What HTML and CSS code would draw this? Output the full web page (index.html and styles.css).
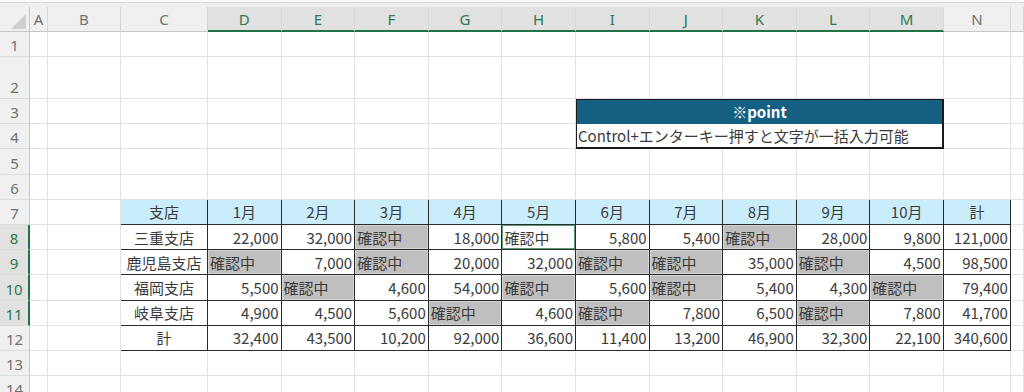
FILE: index.html
```html
<!DOCTYPE html>
<html lang="ja">
<head>
    <meta charset="UTF-8">
    <meta name="viewport" content="width=device-width, initial-scale=1.0">
    <title>支店別売上</title>
    <link rel="stylesheet" href="styles.css">
</head>
<body>
    <div class="topbar"></div>
    <div class="sheet">
        <!-- column headers -->
        <div class="corner"><svg width="30" height="25" viewBox="0 0 30 25"><polygon points="26,7 26,22 11,22" fill="#cfcfcf"/></svg></div>
        <div class="colhead">A</div>
        <div class="colhead">B</div>
        <div class="colhead">C</div>
        <div class="colhead sel">D</div>
        <div class="colhead sel">E</div>
        <div class="colhead sel">F</div>
        <div class="colhead sel">G</div>
        <div class="colhead sel">H</div>
        <div class="colhead sel">I</div>
        <div class="colhead sel">J</div>
        <div class="colhead sel">K</div>
        <div class="colhead sel">L</div>
        <div class="colhead sel">M</div>
        <div class="colhead">N</div>
        <div class="colhead"></div>

        <!-- point box I3:M4 -->
        <div class="point">
            <div class="point-head">※point</div>
            <div class="point-body">Control+エンターキー押すと文字が一括入力可能</div>
        </div>

        <!-- sales table C7:N12 -->
        <div class="sales">
            <div class="h">支店</div><div class="h">1月</div><div class="h">2月</div><div class="h">3月</div><div class="h">4月</div><div class="h">5月</div><div class="h">6月</div><div class="h">7月</div><div class="h">8月</div><div class="h">9月</div><div class="h">10月</div><div class="h">計</div>

            <div class="name">三重支店</div>
            <div class="num">22,000</div><div class="num">32,000</div><div class="wait">確認中</div><div class="num">18,000</div><div class="txt active">確認中</div><div class="num">5,800</div><div class="num">5,400</div><div class="wait">確認中</div><div class="num">28,000</div><div class="num">9,800</div><div class="num">121,000</div>

            <div class="name">鹿児島支店</div>
            <div class="wait">確認中</div><div class="num">7,000</div><div class="wait">確認中</div><div class="num">20,000</div><div class="num">32,000</div><div class="wait">確認中</div><div class="wait">確認中</div><div class="num">35,000</div><div class="wait">確認中</div><div class="num">4,500</div><div class="num">98,500</div>

            <div class="name">福岡支店</div>
            <div class="num">5,500</div><div class="wait">確認中</div><div class="num">4,600</div><div class="num">54,000</div><div class="wait">確認中</div><div class="num">5,600</div><div class="wait">確認中</div><div class="num">5,400</div><div class="num">4,300</div><div class="wait">確認中</div><div class="num">79,400</div>

            <div class="name">岐阜支店</div>
            <div class="num">4,900</div><div class="num">4,500</div><div class="num">5,600</div><div class="wait">確認中</div><div class="num">4,600</div><div class="wait">確認中</div><div class="num">7,800</div><div class="num">6,500</div><div class="wait">確認中</div><div class="num">7,800</div><div class="num">41,700</div>

            <div class="name">計</div>
            <div class="num">32,400</div><div class="num">43,500</div><div class="num">10,200</div><div class="num">92,000</div><div class="num">36,600</div><div class="num">11,400</div><div class="num">13,200</div><div class="num">46,900</div><div class="num">32,300</div><div class="num">22,100</div><div class="num">340,600</div>
        </div>

        <!-- row 1 -->
        <div class="rowhead">1</div>
        <div class="c"></div><div class="c"></div><div class="c"></div><div class="c"></div><div class="c"></div><div class="c"></div><div class="c"></div><div class="c"></div><div class="c"></div><div class="c"></div><div class="c"></div><div class="c"></div><div class="c"></div><div class="c"></div><div class="c"></div>
        <!-- row 2 -->
        <div class="rowhead">2</div>
        <div class="c"></div><div class="c"></div><div class="c"></div><div class="c"></div><div class="c"></div><div class="c"></div><div class="c"></div><div class="c"></div><div class="c"></div><div class="c"></div><div class="c"></div><div class="c"></div><div class="c"></div><div class="c"></div><div class="c"></div>
        <!-- row 3 (I..M taken by point box) -->
        <div class="rowhead">3</div>
        <div class="c"></div><div class="c"></div><div class="c"></div><div class="c"></div><div class="c"></div><div class="c"></div><div class="c"></div><div class="c"></div><div class="c"></div><div class="c"></div>
        <!-- row 4 -->
        <div class="rowhead">4</div>
        <div class="c"></div><div class="c"></div><div class="c"></div><div class="c"></div><div class="c"></div><div class="c"></div><div class="c"></div><div class="c"></div><div class="c"></div><div class="c"></div>
        <!-- row 5 -->
        <div class="rowhead">5</div>
        <div class="c"></div><div class="c"></div><div class="c"></div><div class="c"></div><div class="c"></div><div class="c"></div><div class="c"></div><div class="c"></div><div class="c"></div><div class="c"></div><div class="c"></div><div class="c"></div><div class="c"></div><div class="c"></div><div class="c"></div>
        <!-- row 6 -->
        <div class="rowhead">6</div>
        <div class="c"></div><div class="c"></div><div class="c"></div><div class="c"></div><div class="c"></div><div class="c"></div><div class="c"></div><div class="c"></div><div class="c"></div><div class="c"></div><div class="c"></div><div class="c"></div><div class="c"></div><div class="c"></div><div class="c"></div>
        <!-- rows 7-12 (C..N taken by sales table) -->
        <div class="rowhead">7</div>
        <div class="c"></div><div class="c"></div><div class="c"></div>
        <div class="rowhead sel">8</div>
        <div class="c"></div><div class="c"></div><div class="c"></div>
        <div class="rowhead sel">9</div>
        <div class="c"></div><div class="c"></div><div class="c"></div>
        <div class="rowhead sel">10</div>
        <div class="c"></div><div class="c"></div><div class="c"></div>
        <div class="rowhead sel">11</div>
        <div class="c"></div><div class="c"></div><div class="c"></div>
        <div class="rowhead">12</div>
        <div class="c"></div><div class="c"></div><div class="c"></div>
        <!-- row 13 -->
        <div class="rowhead">13</div>
        <div class="c"></div><div class="c"></div><div class="c"></div><div class="c"></div><div class="c"></div><div class="c"></div><div class="c"></div><div class="c"></div><div class="c"></div><div class="c"></div><div class="c"></div><div class="c"></div><div class="c"></div><div class="c"></div><div class="c"></div>
        <!-- row 14 -->
        <div class="rowhead">14</div>
        <div class="c"></div><div class="c"></div><div class="c"></div><div class="c"></div><div class="c"></div><div class="c"></div><div class="c"></div><div class="c"></div><div class="c"></div><div class="c"></div><div class="c"></div><div class="c"></div><div class="c"></div><div class="c"></div><div class="c"></div>
    </div>
</body>
</html>
```

FILE: styles.css
```css
*{
    box-sizing:border-box;
}
body{
    margin:0;
    background-color:#ffffff;
    font-family:"Noto Sans CJK JP","Noto Sans",sans-serif;
    font-size:15px;
    color:#3a3a3a;
    overflow:hidden;
}
.topbar{
    height:7px;
    background:linear-gradient(#fafafa 0 2px, #d6d6d6 2px 3px, #f0f0f0 3px);
}
.sheet{
    display:grid;
    grid-template-columns:30px 18px 73px 87px repeat(10, 73.6px) 67px 1fr;
    grid-template-rows:25px 25px 42px repeat(12, 25.2px);
}

/* headers */
.corner{
    background-color:#f0f0f0;
    border-right:1px solid #c6c6c6;
    border-bottom:1px solid #c6c6c6;
}
.corner svg{
    display:block;
}
.colhead{
    display:flex;
    align-items:center;
    justify-content:center;
    font-family:"Noto Sans",sans-serif;
    font-size:15px;
    color:#707070;
    background-color:#f0f0f0;
    border-right:1px solid #d6d6d6;
    border-bottom:1px solid #c6c6c6;
}
.colhead.sel{
    background-color:#e1e1e1;
    color:#2a7a52;
    border-bottom:2px solid #217346;
}
.rowhead{
    display:flex;
    align-items:flex-end;
    justify-content:center;
    padding-bottom:1px;
    font-family:"Noto Sans",sans-serif;
    font-size:15px;
    color:#707070;
    background-color:#f0f0f0;
    border-right:1px solid #c6c6c6;
    border-bottom:1px solid #dcdcdc;
}
.rowhead.sel{
    background-color:#e1e1e1;
    color:#2a7a52;
    border-right:2px solid #217346;
}

/* plain cells */
.c{
    border-right:1px solid #e2e2e2;
    border-bottom:1px solid #e2e2e2;
}

/* point box */
.point{
    grid-column:10 / span 5;
    grid-row:4 / span 2;
    margin:-1px 0 0 -1px;
    display:grid;
    grid-template-rows:1fr 1fr;
    border:2px solid #1a1a1a;
    background-color:#ffffff;
}
.point-head{
    display:flex;
    align-items:center;
    justify-content:center;
    background-color:#156082;
    color:#ffffff;
    font-weight:bold;
}
.point-body{
    display:flex;
    align-items:center;
    padding-left:1px;
    white-space:nowrap;
}

/* sales table */
.sales{
    grid-column:4 / span 12;
    grid-row:8 / span 6;
    margin:-1px 0 0 -1px;
    display:grid;
    grid-template-columns:87px repeat(10, 73.6px) 67px;
    grid-template-rows:repeat(6, 1fr);
    border-left:1px solid #2a2a2a;
    border-top:1px solid #2a2a2a;
}
.sales div{
    display:flex;
    align-items:center;
    white-space:nowrap;
    border-right:1px solid #2a2a2a;
    border-bottom:1px solid #2a2a2a;
}
.sales .h{
    justify-content:center;
    background-color:#caedfb;
}
.sales .name{
    justify-content:center;
}
.sales .num{
    justify-content:flex-end;
    padding-right:2px;
}
.sales .txt,
.sales .wait{
    padding-left:2px;
}
.sales .wait{
    background-color:#bfbfbf;
    box-shadow:inset 0 0 0 1px #d4d4d4;
}
.sales .active{
    box-shadow:inset 0 0 0 1px #5a9c76;
}
```
